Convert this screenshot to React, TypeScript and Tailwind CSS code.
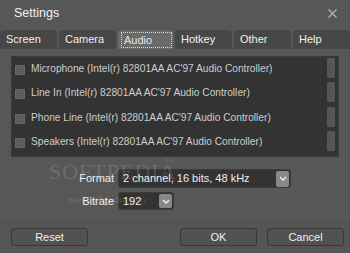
import React from "react";

const tabs = ["Screen", "Camera", "Audio", "Hotkey", "Other", "Help"];
const devices = [
  "Microphone (Intel(r) 82801AA AC'97 Audio Controller)",
  "Line In (Intel(r) 82801AA AC'97 Audio Controller)",
  "Phone Line (Intel(r) 82801AA AC'97 Audio Controller)",
  "Speakers (Intel(r) 82801AA AC'97 Audio Controller)",
];

function Chevron() {
  return (
    <svg width="8" height="5" viewBox="0 0 8 5">
      <path d="M1 1 L4 4 L7 1" stroke="#f0f0f0" strokeWidth="1.4" fill="none" />
    </svg>
  );
}

export default function App() {
  return (
    <div
      className="relative w-[350px] h-[253px] bg-[#575757] flex flex-col overflow-hidden text-[#e6e6e6]"
      style={{ fontFamily: "'Liberation Sans', Arial, sans-serif" }}
    >
      {/* Title bar */}
      <div className="h-[29px] flex items-center justify-between pl-[14px] pr-[13px] pb-[3px]">
        <span className="text-[12.5px] text-[#f2f2f2]">Settings</span>
        <svg width="9" height="9" viewBox="0 0 9 9">
          <path d="M0.5 0.5 L8.5 8.5 M8.5 0.5 L0.5 8.5" stroke="#b8b8b8" strokeWidth="1.2" />
        </svg>
      </div>
      {/* Tabs */}
      <div className="h-[19px] flex gap-[2px] mt-[1px]">
        {tabs.map((t) => {
          const active = t === "Audio";
          return (
            <div
              key={t}
              className={
                "flex-1 rounded-t-[4px] flex items-center text-[11px] " +
                (active ? "bg-[#6a6a6a] pl-[3px] pr-[1px] pt-[1px]" : "bg-[#474747] pl-[6px]")
              }
            >
              {active ? (
                <span className="border border-dotted border-[#d8d8d8] pl-[2px] h-[16px] leading-[14px] flex-1">{t}</span>
              ) : (
                <span className="leading-[13px] text-[#f0f0f0]">{t}</span>
              )}
            </div>
          );
        })}
      </div>
      {/* Content */}
      <div className="flex-1 bg-[#575757] flex flex-col">
        <div className="mt-[7px] ml-[11px] mr-[11px] h-[101px] bg-[#333333] border border-[#3b3b3b] flex flex-col pt-[1px] pl-[3px] pr-[3px]">
          {devices.map((d) => (
            <div key={d} className="h-[24.3px] flex items-start">
              <div className="mt-[7px] w-[10px] h-[10px] bg-[#5c5c5c] border border-[#656565]" />
              <span className="ml-[6px] text-[10.2px] leading-[22px] text-[#cdcdcd] flex-1 whitespace-nowrap">{d}</span>
              <div className="w-[8px] h-[20px] bg-[#565656] rounded-[1px]" />
            </div>
          ))}
        </div>
        <div className="flex flex-col mt-[12px] gap-[4px]">
          <div className="flex items-center h-[19px]">
            <span className="w-[118px] text-right pr-[4px] text-[11px] text-[#f0f0f0]">Format</span>
            <div className="w-[173px] h-[19px] bg-[#333333] rounded-[3px] border border-[#3c3c3c] flex items-center justify-between pl-[4px] pr-[1px]">
              <span className="text-[11px] text-[#f0f0f0]">2 channel, 16 bits, 48 kHz</span>
              <div className="w-[13px] h-[16px] bg-[#888888] rounded-[2px] flex items-center justify-center">
                <Chevron />
              </div>
            </div>
          </div>
          <div className="flex items-center h-[18px]">
            <span className="w-[118px] text-right pr-[4px] text-[11px] text-[#f0f0f0]">Bitrate</span>
            <div className="w-[56px] h-[18px] bg-[#333333] rounded-[3px] border border-[#3c3c3c] flex items-center justify-between pl-[4px] pr-[1px]">
              <span className="text-[11px] text-[#f0f0f0]">192</span>
              <div className="w-[13px] h-[14px] bg-[#888888] rounded-[2px] flex items-center justify-center">
                <Chevron />
              </div>
            </div>
          </div>
        </div>
        <div className="flex-1" />
        {/* Footer */}
        <div className="h-[31px] border-t border-[#4c4c4c] bg-[#555555] flex items-start pt-[5px] pl-[11px] pr-[6px]">
          <button className="w-[77px] h-[18px] rounded-[3px] border border-[#383838] bg-[#515151] text-[11px] leading-[16px] text-[#f0f0f0]">Reset</button>
          <div className="flex-1" />
          <button className="w-[77px] h-[18px] rounded-[3px] border border-[#383838] bg-[#515151] text-[11px] leading-[16px] text-[#f0f0f0]">OK</button>
          <button className="ml-[10px] w-[77px] h-[18px] rounded-[3px] border border-[#383838] bg-[#515151] text-[11px] leading-[16px] text-[#f0f0f0]">Cancel</button>
        </div>
      </div>
      {/* Watermark */}
      <div
        className="absolute left-[49px] top-[159px] text-[22px] leading-[26px] tracking-[1px] text-white/15 pointer-events-none"
        style={{ fontFamily: "'Liberation Serif', serif" }}
      >
        SOFTPEDIA
      </div>
      <div className="absolute left-[165px] top-[157px] text-[6px] text-white/15 pointer-events-none">TM</div>
      <div className="absolute left-[68px] top-[194px] text-[9px] text-white/15 pointer-events-none">
        www.softpedia.com
      </div>
    </div>
  );
}
